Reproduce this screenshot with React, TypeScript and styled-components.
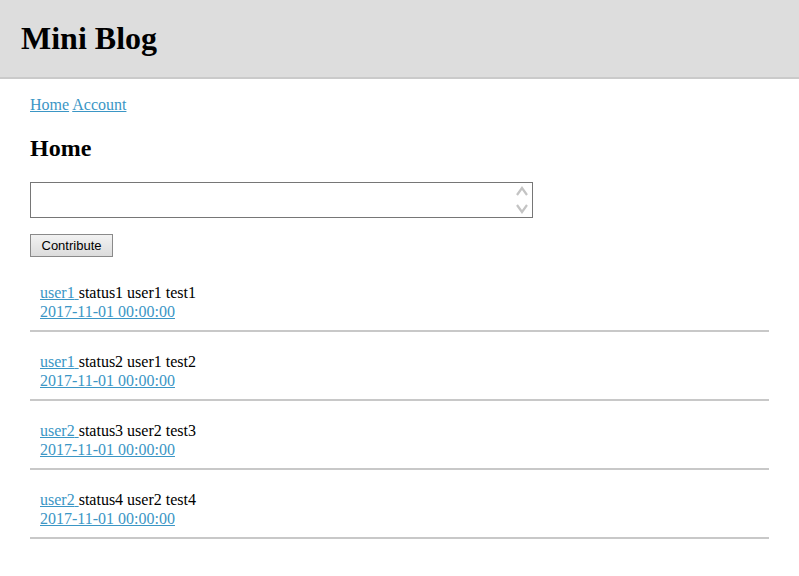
import React from "react";
import styled, { createGlobalStyle } from "styled-components";

const GlobalStyle = createGlobalStyle`
  body {
    margin: 0;
    background: #fff;
    font-family: "Liberation Serif", "Times New Roman", serif;
    font-size: 16px;
    color: #000;
  }
`;

const posts = [
  { id: 1, user: "user1", text: "status1 user1 test1", date: "2017-11-01 00:00:00" },
  { id: 2, user: "user1", text: "status2 user1 test2", date: "2017-11-01 00:00:00" },
  { id: 3, user: "user2", text: "status3 user2 test3", date: "2017-11-01 00:00:00" },
  { id: 4, user: "user2", text: "status4 user2 test4", date: "2017-11-01 00:00:00" }
];

const App: React.FC = () => {
  return (
    <>
      <GlobalStyle />
      <StyledHeader>
        <StyledTitle>Mini Blog</StyledTitle>
      </StyledHeader>
      <StyledMain>
        <StyledNav>
          <StyledLink href="#">Home</StyledLink> <StyledLink href="#">Account</StyledLink>
        </StyledNav>
        <StyledHeading>Home</StyledHeading>
        <StyledForm>
          <StyledTextAreaBox>
            <StyledTextArea />
            <StyledSpinner>
              <svg width="14" height="32" viewBox="0 0 14 32">
                <path d="M2 11 L7 4 L12 11" fill="none" stroke="#c4c4c4" strokeWidth="2.2" />
                <path d="M2 21 L7 28 L12 21" fill="none" stroke="#c4c4c4" strokeWidth="2.2" />
              </svg>
            </StyledSpinner>
          </StyledTextAreaBox>
          <div>
            <StyledButton type="button">Contribute</StyledButton>
          </div>
        </StyledForm>
        <StyledPostList>
          {posts.map(post => (
            <StyledPost key={post.id}>
              <div>
                <StyledLink href="#">{post.user} </StyledLink>
                {post.text}
              </div>
              <div>
                <StyledLink href="#">{post.date}</StyledLink>
              </div>
            </StyledPost>
          ))}
        </StyledPostList>
      </StyledMain>
    </>
  );
};

const StyledHeader = styled.header`
  height: 77px;
  background: #dddddd;
  border-bottom: 2px solid #cacaca;
  display: flex;
  align-items: center;
  padding: 0 21px;
`;

const StyledTitle = styled.h1`
  margin: 0;
  font-size: 32px;
  font-weight: bold;
`;

const StyledMain = styled.main`
  padding: 0 30px;
`;

const StyledNav = styled.nav`
  margin-top: 17px;
  line-height: 18px;
`;

const StyledLink = styled.a`
  color: #3b96c5;
  text-decoration: underline;
`;

const StyledHeading = styled.h2`
  font-size: 24px;
  font-weight: bold;
  margin: 20px 0 0;
  line-height: 28px;
`;

const StyledForm = styled.div`
  margin-top: 20px;
  display: flex;
  flex-direction: column;
  gap: 16px;
`;

const StyledTextAreaBox = styled.div`
  position: relative;
  width: 503px;
  height: 36px;
  box-sizing: border-box;
  border: 1px solid #767676;
  background: #fff;
`;

const StyledTextArea = styled.textarea`
  display: block;
  width: 100%;
  height: 100%;
  box-sizing: border-box;
  border: none;
  outline: none;
  resize: none;
  padding: 2px 22px 2px 3px;
  font-family: "Liberation Mono", monospace;
  font-size: 13px;
  background: transparent;
`;

const StyledSpinner = styled.div`
  position: absolute;
  right: 3px;
  top: 1px;
  width: 14px;
  height: 32px;
  pointer-events: none;
`;

const StyledButton = styled.button`
  height: 23px;
  width: 83px;
  padding: 0;
  font-family: "Liberation Sans", Arial, sans-serif;
  font-size: 13px;
  color: #000;
  border: 1px solid #8a8a8a;
  background: linear-gradient(#f2f2f2, #dcdcdc);
`;

const StyledPostList = styled.div`
  margin-top: 26px;
`;

const StyledPost = styled.div`
  padding: 0 10px 9px;
  border-bottom: 2px solid #c8c8c8;
  line-height: 19px;
  & + & {
    padding-top: 20px;
  }
`;

export default App;
